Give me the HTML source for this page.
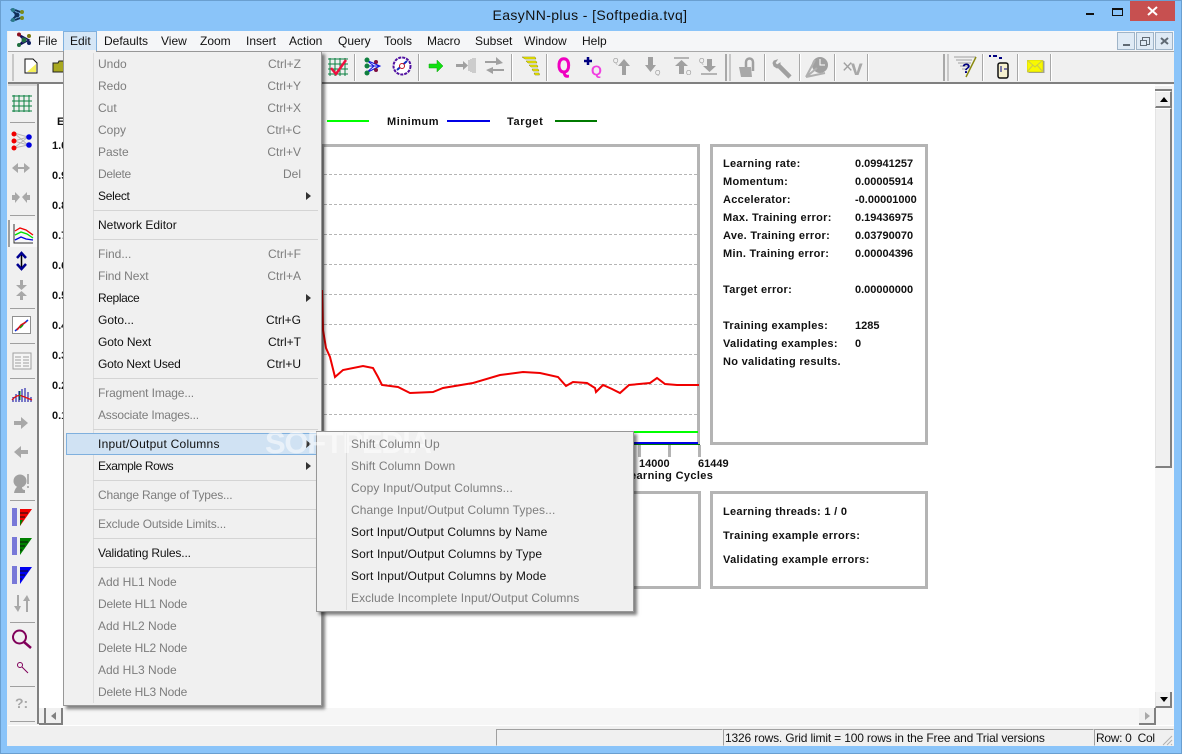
<!DOCTYPE html>
<html><head><meta charset="utf-8"><title>EasyNN-plus</title>
<style>
html,body{margin:0;padding:0;width:1182px;height:754px;overflow:hidden;background:#8ac4f9}
*{box-sizing:border-box}
body{font-family:"Liberation Sans",sans-serif;position:relative}
div,span,svg{position:absolute}
.t{white-space:nowrap;line-height:14px}
.mb{font-size:12px;top:34px;color:#111;white-space:nowrap;line-height:14px}
.b{font-weight:bold;font-size:11px;color:#111;white-space:nowrap;line-height:13px}
.l{letter-spacing:.3px}
.m{font-size:12px;color:#111;white-space:nowrap;line-height:14px;left:98px}
.g{color:#7d7d7d}
.s{font-size:12px;color:#7d7d7d;white-space:nowrap;line-height:14px;right:881px}
.n{left:351px;letter-spacing:.09px}
.sep{background:#d4d4d4;height:1px;left:93px;width:225px}
.ts{top:54px;width:2px;height:27px;background:#a8a8a8;border-right:1px solid #fff}
.ls{left:10px;width:25px;height:1px;background:#a0a0a0}
.dash{left:324px;width:373px;border-top:1px dashed #b5b5b5;height:1px}
</style></head><body>
<!-- frame -->
<div style="left:0;top:0;width:1182px;height:754px;background:#8ac4f9;border:1px solid #6a9fd0"></div>
<div class="t" style="left:0;width:1182px;top:7px;text-align:center;font-size:14px;color:#111;line-height:16px;letter-spacing:.39px;text-indent:-2px">EasyNN-plus - [Softpedia.tvq]</div>
<svg style="left:9px;top:7px" width="18" height="17" viewBox="0 0 18 17"><path d="M2 2L8 8L2 14M6 3L14 6M6 13L14 10" stroke="#10305a" stroke-width="2" fill="none"/><circle cx="4" cy="3" r="2" fill="#2a7a8a"/><circle cx="4" cy="13" r="2" fill="#2a7a8a"/><circle cx="8" cy="8" r="2.5" fill="#10305a"/><circle cx="13" cy="5" r="2" fill="#7a8a20"/><circle cx="13" cy="11" r="2" fill="#7a8a20"/></svg>
<div style="left:1086px;top:13px;width:8px;height:2px;background:#111"></div>
<div style="left:1112px;top:8px;width:11px;height:8px;border:1px solid #111;border-top-width:2px"></div>
<div style="left:1130px;top:1px;width:45px;height:20px;background:#c75050"></div>
<svg style="left:1147px;top:6px" width="11" height="10" viewBox="0 0 11 10"><path d="M1 1L10 9M10 1L1 9" stroke="#fff" stroke-width="2"/></svg>

<!-- client -->
<div style="left:7px;top:31px;width:1167px;height:715px;background:#f0f0f0"></div>
<div style="left:8px;top:31px;width:1166px;height:20px;background:#f5f6f8"></div>
<div style="left:8px;top:51px;width:1166px;height:1px;background:#a8a8a8"></div>
<svg style="left:15px;top:32px" width="18" height="16" viewBox="0 0 18 16"><path d="M3 2L9 8L3 14M3 2L14 8L3 14" stroke="#10105a" stroke-width="1.5" fill="none"/><circle cx="4" cy="2.5" r="2" fill="#8a1020"/><circle cx="4" cy="13" r="2" fill="#207040"/><circle cx="9" cy="8" r="2.5" fill="#207040"/><circle cx="14" cy="4" r="2" fill="#7a7a10"/><circle cx="14" cy="11" r="2" fill="#102060"/></svg>
<div class="mb" style="left:38px">File</div>
<div style="left:63px;top:31px;width:34px;height:20px;background:#d5e6f6;border:1px solid #7fb0de"></div>
<div class="mb" style="left:70px">Edit</div>
<div class="mb" style="left:104px">Defaults</div>
<div class="mb" style="left:161px">View</div>
<div class="mb" style="left:200px">Zoom</div>
<div class="mb" style="left:246px">Insert</div>
<div class="mb" style="left:289px">Action</div>
<div class="mb" style="left:338px">Query</div>
<div class="mb" style="left:384px">Tools</div>
<div class="mb" style="left:427px">Macro</div>
<div class="mb" style="left:475px">Subset</div>
<div class="mb" style="left:524px">Window</div>
<div class="mb" style="left:582px">Help</div>
<!-- MDI buttons -->
<div style="left:1117px;top:32px;width:18px;height:18px;background:#dfeaf5;border:1px solid #9fb4c8"></div>
<div style="left:1123px;top:44px;width:7px;height:2px;background:#606a74"></div>
<div style="left:1136px;top:32px;width:18px;height:18px;background:#dfeaf5;border:1px solid #9fb4c8"></div>
<div style="left:1142px;top:37px;width:8px;height:8px;border:1px solid #606a74"></div>
<div style="left:1140px;top:40px;width:7px;height:6px;border:1px solid #606a74;background:#dfeaf5"></div>
<div style="left:1155px;top:32px;width:18px;height:18px;background:#dfeaf5;border:1px solid #9fb4c8"></div>
<svg style="left:1160px;top:37px" width="9" height="8" viewBox="0 0 9 8"><path d="M1 1L8 7M8 1L1 7" stroke="#606a74" stroke-width="2"/></svg>

<!-- toolbar -->
<div style="left:12px;top:54px;width:2px;height:27px;background:#c8c8c8"></div>
<svg style="left:24px;top:58px" width="14" height="16" viewBox="0 0 14 16"><path d="M1 1H9L13 5V15H1Z" fill="#fff" stroke="#111"/><path d="M3 14L12 6V14Z" fill="#f5f05a"/></svg>
<svg style="left:52px;top:60px" width="14" height="13" viewBox="0 0 14 13"><path d="M1 3H6L7 1H13V12H1Z" fill="#a8a820" stroke="#222"/></svg>
<div class="ts" style="left:354px"></div>
<svg style="left:328px;top:57px" width="20" height="20" viewBox="0 0 20 20"><path d="M2 1V19M7 1V19M12 1V19M17 1V19M0 2H20M0 7H20M0 12H20M0 17H20" stroke="#0a8040" stroke-width="1"/><path d="M3 11L8 17L18 3" stroke="#f01040" stroke-width="2.5" fill="none"/></svg>
<svg style="left:362px;top:56px" width="22" height="21" viewBox="0 0 22 21"><path d="M4 4L18 10L4 17M4 4L12 10L4 17M4 10H18" stroke="#1010e0" fill="none"/><circle cx="5" cy="4" r="2.5" fill="#108040"/><circle cx="5" cy="10" r="2.5" fill="#108040"/><circle cx="5" cy="17" r="2.5" fill="#108040"/><circle cx="14" cy="6" r="2" fill="#801040"/><circle cx="14" cy="14" r="2" fill="#801040"/></svg>
<svg style="left:392px;top:56px" width="20" height="20" viewBox="0 0 20 20"><circle cx="10" cy="10" r="8.5" fill="#fff" stroke="#5010a0" stroke-width="2" stroke-dasharray="3 1"/><path d="M5 14L15 5" stroke="#1030c0" stroke-width="2"/><circle cx="10" cy="10" r="2.5" fill="#fff" stroke="#c01020"/></svg>
<div class="ts" style="left:418px"></div>
<svg style="left:428px;top:59px" width="16" height="14" viewBox="0 0 16 14"><path d="M1 5H9V1L15 7L9 13V9H1Z" fill="#10e010" stroke="#10a010" stroke-width=".5"/></svg>
<svg style="left:455px;top:57px" width="22" height="17" viewBox="0 0 22 17"><path d="M1 7H8V4L13 8.500L8 13V10H1Z" fill="#a0a0a0"/><path d="M14 3V14M16 2V15M18 1V16M20 1V16" stroke="#a8a8a8"/></svg>
<svg style="left:484px;top:56px" width="21" height="19" viewBox="0 0 21 19"><path d="M1 5H12V1L19 7L12 9V7H1ZM20 13H9V11L2 14L9 18V15H20Z" fill="#a0a0a0"/></svg>
<div class="ts" style="left:511px"></div>
<svg style="left:521px;top:56px" width="19" height="20" viewBox="0 0 19 20"><path d="M1 1H14L15 3H4ZM5 5H15L16 7H7ZM8 9H16L17 11H10ZM11 13H17L18 15H12ZM13 17H18L18.500 19H14Z" fill="#f5f000" stroke="#808000" stroke-width=".5"/></svg>
<div class="ts" style="left:546px"></div>
<div class="t" style="left:557px;top:55px;font:bold 22px/22px 'Liberation Sans',sans-serif;transform:scaleX(.8);transform-origin:0 0;color:#f000c0;-webkit-text-stroke:.5px #f000c0">Q</div>
<svg style="left:584px;top:57px" width="8" height="9" viewBox="0 0 8 9"><path d="M4 0V8M0 4H8" stroke="#000080" stroke-width="2.500"/></svg>
<div class="t" style="left:591px;top:63px;font:bold 14px/14px 'Liberation Sans',sans-serif;color:#f040e0">Q</div>
<svg style="left:613px;top:56px" width="18" height="20" viewBox="0 0 18 20"><path d="M9 19V10H5L11 3L17 10H13V19Z" fill="#a0a0a0"/><text x="0" y="7" font-size="7" fill="#a0a0a0" font-family="Liberation Sans">Q</text></svg>
<svg style="left:645px;top:56px" width="18" height="20" viewBox="0 0 18 20"><path d="M3 1V9H0L5.500 16L11 9H8V1Z" fill="#a0a0a0"/><text x="10" y="19" font-size="7" fill="#a0a0a0" font-family="Liberation Sans">Q</text></svg>
<svg style="left:673px;top:57px" width="20" height="18" viewBox="0 0 20 18"><path d="M1 1H16" stroke="#a0a0a0" stroke-width="1.500"/><path d="M6 17V9H2L8.500 3L15 9H11V17Z" fill="#a0a0a0"/><text x="13" y="18" font-size="7" fill="#a0a0a0" font-family="Liberation Sans">Q</text></svg>
<svg style="left:699px;top:56px" width="20" height="19" viewBox="0 0 20 19"><path d="M8 3V10H4L10.500 16L17 10H13V3Z" fill="#a0a0a0"/><path d="M2 18H18" stroke="#a0a0a0" stroke-width="1.500"/><text x="0" y="7" font-size="7" fill="#a0a0a0" font-family="Liberation Sans">Q</text></svg>
<div style="left:725px;top:54px;width:2px;height:27px;background:#a8a8a8"></div>
<div style="left:729px;top:54px;width:2px;height:27px;background:#c8c8c8"></div>
<svg style="left:738px;top:57px" width="18" height="21" viewBox="0 0 18 21"><path d="M1 10H13L14 20H3Z" fill="#a8a8a8"/><path d="M8 10V5A3.500 3.500 0 0 1 15 5V14" stroke="#a0a0a0" stroke-width="2.500" fill="none"/></svg>
<div class="ts" style="left:764px"></div>
<svg style="left:772px;top:59px" width="21" height="20" viewBox="0 0 21 20"><path d="M7 7L18 18" stroke="#a0a0a0" stroke-width="4.500"/><path d="M2 2L5 1L3 4L5 6L8 4L8 8L5 9L2 7L1 4Z" fill="#a0a0a0" stroke="#a0a0a0"/></svg>
<div class="ts" style="left:799px"></div>
<svg style="left:805px;top:56px" width="24" height="23" viewBox="0 0 24 23"><circle cx="15" cy="9" r="8" fill="#a0a0a0"/><path d="M1 21L10 4M1 21L12 12M1 21L20 17" stroke="#b0b0b0" stroke-width="2"/><path d="M15 3V9H20" stroke="#fff" fill="none"/></svg>
<div class="ts" style="left:834px"></div>
<div class="t" style="left:842px;top:58px;font-size:19px;line-height:20px;color:#a0a0a0">×</div>
<div class="t" style="left:851px;top:59px;font-size:21px;line-height:20px;color:#a8a8a8;font-weight:bold">v</div>
<div class="ts" style="left:867px"></div>
<div style="left:943px;top:54px;width:2px;height:27px;background:#a8a8a8"></div>
<div style="left:947px;top:54px;width:2px;height:27px;background:#c8c8c8"></div>
<svg style="left:953px;top:56px" width="24" height="22" viewBox="0 0 24 22"><path d="M1 1H23M3 4H19M5 7H18M7 10H16M9 13H14" stroke="#a0a0a0"/><path d="M23 1L13 21" stroke="#8a8a10" stroke-width="1.500"/><text x="9" y="17" font-size="14" font-weight="bold" fill="#000080" font-family="Liberation Sans">?</text></svg>
<div class="ts" style="left:982px"></div>
<svg style="left:988px;top:55px" width="22" height="24" viewBox="0 0 22 24"><rect x="10" y="8" width="10" height="15" rx="2" fill="#f5f0d0" stroke="#111" stroke-width="1.500"/><path d="M1 1H3M5 1H9M11 3H14" stroke="#000080" stroke-width="2"/><path d="M13 11V17M16 14H19" stroke="#000080"/></svg>
<div class="ts" style="left:1017px"></div>
<svg style="left:1027px;top:60px" width="18" height="14" viewBox="0 0 18 14"><rect x="1.500" y="1" width="16" height="12" fill="#a0a0a0"/><rect x="0" y="0" width="16" height="12" fill="#f8f800" stroke="#b0b020" stroke-width=".5"/><path d="M0 0L8 7L16 0M0 12L6 5M16 12L10 5" stroke="#c8c850" fill="none"/></svg>
<div class="ts" style="left:1050px"></div>
<div style="left:8px;top:82px;width:1166px;height:2px;background:#808080"></div>

<!-- left toolbar -->
<div style="left:37px;top:84px;width:2px;height:640px;background:#808080"></div>
<div style="left:8px;top:84px;width:29px;height:2px;background:#d8d8d8"></div>
<svg style="left:12px;top:94px" width="20" height="19" viewBox="0 0 20 19"><path d="M2 1V18M7 1V18M12 1V18M17 1V18M0 2H20M0 7H20M0 12H20M0 17H20" stroke="#0a8040"/></svg>
<div class="ls" style="top:122px"></div>
<svg style="left:11px;top:129px" width="22" height="22" viewBox="0 0 22 22"><path d="M3 4L17 8L3 12L17 16L3 19M3 4L17 16M3 19L17 8" stroke="#b8b8b8" fill="none"/><circle cx="3" cy="5" r="2.500" fill="#f00000"/><circle cx="3" cy="12" r="2.500" fill="#f00000"/><circle cx="3" cy="19" r="2.500" fill="#f00000"/><circle cx="18" cy="8" r="2.800" fill="#0000e0"/><circle cx="18" cy="16" r="2.800" fill="#0000e0"/></svg>
<svg style="left:11px;top:161px" width="20" height="14" viewBox="0 0 20 14"><path d="M1 7L7 2V12ZM19 7L13 2V12ZM7 6H13V8H7Z" fill="#a8a8a8"/></svg>
<svg style="left:11px;top:191px" width="20" height="13" viewBox="0 0 20 13"><path d="M9 6L4 1V4H1V9H4V12ZM11 6L16 1V4H19V9H16V12Z" fill="#a8a8a8"/></svg>
<div class="ls" style="top:215px"></div>
<div style="left:8px;top:220px;width:29px;height:27px;background:#f8f8f8;border-left:2px solid #a0a0a0"></div>
<svg style="left:12px;top:223px" width="22" height="21" viewBox="0 0 22 21"><path d="M2 1V20H21" stroke="#333" fill="none"/><path d="M3 8L8 5L14 7L21 12" stroke="#f00000" fill="none" stroke-width="1.300"/><path d="M3 12L9 9L15 11L21 15" stroke="#00e000" fill="none" stroke-width="1.300"/><path d="M3 17L9 14L14 16L21 17" stroke="#0000e0" fill="none" stroke-width="1.300"/></svg>
<svg style="left:14px;top:250px" width="15" height="22" viewBox="0 0 15 22"><path d="M7.500 3V19" stroke="#000" stroke-width="1.500"/><path d="M3 8L7.500 3L12 8M3 14L7.500 19L12 14" stroke="#000090" stroke-width="2.500" fill="none"/></svg>
<svg style="left:14px;top:280px" width="15" height="21" viewBox="0 0 15 21"><path d="M6 0H9V5H13L7.500 10L2 5H6ZM7.500 11L13 16H9V20H6V16H2Z" fill="#a8a8a8"/></svg>
<div class="ls" style="top:308px"></div>
<div style="left:12px;top:316px;width:19px;height:18px;border:1px solid #909090;background:#fff"></div>
<svg style="left:12px;top:316px" width="19" height="18" viewBox="0 0 19 18"><path d="M3 15L16 4" stroke="#1030d0" stroke-width="1.500"/><path d="M5 14L9 9L14 6" stroke="#e01010" stroke-width="1.500" fill="none"/><path d="M8 12L11 9" stroke="#10a010" stroke-width="1.500"/></svg>
<div class="ls" style="top:343px"></div>
<svg style="left:12px;top:351px" width="20" height="19" viewBox="0 0 20 19"><rect x="1" y="2" width="18" height="16" fill="#f5f5f5" stroke="#a0a0a0"/><path d="M3 6H9M11 6H17M3 9H9M11 9H17M3 12H9M11 12H17M3 15H9M11 15H17" stroke="#a0a0a0"/></svg>
<div class="ls" style="top:378px"></div>
<svg style="left:11px;top:386px" width="22" height="18" viewBox="0 0 22 18"><path d="M2 16V11M5 16V8M8 16V5M11 16V3M14 16V2M17 16V6M20 16V11" stroke="#0000a0"/><path d="M1 14Q6 8 11 10T21 14" stroke="#e01010" fill="none" stroke-width="1.300"/><path d="M9 5V14" stroke="#10a010"/></svg>
<svg style="left:13px;top:416px" width="16" height="14" viewBox="0 0 16 14"><path d="M1 5H8V1L15 7L8 13V9H1Z" fill="#a8a8a8"/></svg>
<svg style="left:13px;top:445px" width="16" height="14" viewBox="0 0 16 14"><path d="M15 5H8V1L1 7L8 13V9H15Z" fill="#a8a8a8"/></svg>
<svg style="left:12px;top:473px" width="18" height="21" viewBox="0 0 18 21"><circle cx="8" cy="8" r="6.500" fill="#a0a0a0"/><path d="M2 20C3 15 5 14 6 13H10C10 15 10 17 13 17V20Z" fill="#a0a0a0"/><path d="M16 1V11" stroke="#b0b0b0" stroke-width="2"/><path d="M16 13V15" stroke="#b0b0b0" stroke-width="2"/></svg>
<div class="ls" style="top:500px"></div>
<svg style="left:11px;top:507px" width="21" height="20" viewBox="0 0 21 20"><path d="M1 2H6M1 4H6M1 6H6M1 8H6M1 10H6M1 12H6M1 14H6M1 16H6M1 18H6" stroke="#0000c0"/><path d="M9 2H21L9 19Z" fill="#f00000"/><path d="M9 6H17M9 10H14" stroke="#111"/><path d="M9 13H12L9 19Z" fill="#008000"/></svg>
<svg style="left:11px;top:536px" width="21" height="20" viewBox="0 0 21 20"><path d="M1 2H6M1 4H6M1 6H6M1 8H6M1 10H6M1 12H6M1 14H6M1 16H6M1 18H6" stroke="#0000c0"/><path d="M9 2H21L9 19Z" fill="#008000"/><path d="M9 6H17M9 10H14M9 14H11" stroke="#111"/></svg>
<svg style="left:11px;top:565px" width="21" height="20" viewBox="0 0 21 20"><path d="M1 2H6M1 4H6M1 6H6M1 8H6M1 10H6M1 12H6M1 14H6M1 16H6M1 18H6" stroke="#0000c0"/><path d="M9 2H21L9 19Z" fill="#0000f0"/><path d="M9 6H17M9 10H14M9 14H11" stroke="#111"/></svg>
<svg style="left:13px;top:594px" width="18" height="19" viewBox="0 0 18 19"><path d="M4 1V12H1L5 18L8 12H6V1ZM13 18V7H10L14 1L17 7H15V18Z" fill="#a8a8a8"/></svg>
<div class="ls" style="top:622px"></div>
<svg style="left:11px;top:629px" width="22" height="20" viewBox="0 0 22 20"><circle cx="8.500" cy="8" r="6.500" fill="none" stroke="#80005a" stroke-width="2"/><path d="M13 13L20 19" stroke="#80005a" stroke-width="2.500"/></svg>
<svg style="left:16px;top:661px" width="13" height="13" viewBox="0 0 13 13"><circle cx="4" cy="4" r="2.500" fill="none" stroke="#80005a"/><path d="M6 6L12 12" stroke="#80005a"/></svg>
<div class="ls" style="top:686px"></div>
<div class="t" style="left:15px;top:695px;font-size:14px;font-weight:bold;color:#a8a8a8;line-height:16px">?:</div>
<div class="ls" style="top:721px"></div>

<!-- content -->
<div style="left:39px;top:84px;width:1116px;height:624px;background:#fff"></div>
<div class="b" style="left:57px;top:116px">Er</div>
<div class="b" style="left:52px;top:140px">1.0</div>
<div class="b" style="left:52px;top:170px">0.9</div>
<div class="b" style="left:52px;top:200px">0.8</div>
<div class="b" style="left:52px;top:230px">0.7</div>
<div class="b" style="left:52px;top:260px">0.6</div>
<div class="b" style="left:52px;top:290px">0.5</div>
<div class="b" style="left:52px;top:320px">0.4</div>
<div class="b" style="left:52px;top:350px">0.3</div>
<div class="b" style="left:52px;top:380px">0.2</div>
<div class="b" style="left:52px;top:410px">0.1</div>
<div style="left:327px;top:120px;width:42px;height:2px;background:#00ff00"></div>
<div class="b" style="left:387px;top:116px;letter-spacing:.55px">Minimum</div>
<div style="left:447px;top:120px;width:43px;height:2px;background:#0000e6"></div>
<div class="b" style="left:507px;top:116px;letter-spacing:.6px">Target</div>
<div style="left:555px;top:120px;width:42px;height:2px;background:#007a00"></div>

<!-- chart -->
<div style="left:63px;top:144px;width:637px;height:3px;background:#b4b4b4"></div>
<div style="left:697px;top:144px;width:3px;height:300px;background:#b4b4b4"></div>
<div style="left:321px;top:144px;width:3px;height:300px;background:#b4b4b4"></div>
<div class="dash" style="top:174px"></div>
<div class="dash" style="top:204px"></div>
<div class="dash" style="top:234px"></div>
<div class="dash" style="top:264px"></div>
<div class="dash" style="top:294px"></div>
<div class="dash" style="top:324px"></div>
<div class="dash" style="top:354px"></div>
<div class="dash" style="top:384px"></div>
<div class="dash" style="top:414px"></div>
<svg style="left:0;top:0" width="1182" height="754" viewBox="0 0 1182 754"><polyline fill="none" stroke="#f00000" stroke-width="2" points="322,290 323,330 326,348 330,357 335,377 343,370 363,366 373,368 378,377 382,385 398,387 410,393 433,392 443,388 473,383 500,375 523,372 540,373 558,377 566,386 573,382 587,383 595,388 596,392 603,385 612,389 620,393 629,385 650,383 657,378 665,384 677,385 699,385"/></svg>
<div style="left:630px;top:431px;width:68px;height:2px;background:#00ff00"></div>
<div style="left:630px;top:442px;width:68px;height:2px;background:#0000e6"></div>
<div style="left:630px;top:444px;width:70px;height:1px;background:#007a00"></div>
<div style="left:638px;top:445px;width:3px;height:12px;background:#b4b4b4"></div>
<div style="left:668px;top:445px;width:3px;height:12px;background:#b4b4b4"></div>
<div style="left:698px;top:445px;width:3px;height:12px;background:#b4b4b4"></div>
<div class="b" style="left:639px;top:458px">14000</div>
<div class="b" style="left:698px;top:458px">61449</div>
<div class="b" style="left:630px;top:470px;letter-spacing:.35px">earning Cycles</div>

<!-- right panel -->
<div style="left:710px;top:144px;width:218px;height:301px;border:3px solid #b4b4b4"></div>
<div class="b l" style="left:723px;top:158px">Learning rate:</div><div class="b" style="left:855px;top:158px">0.09941257</div>
<div class="b l" style="left:723px;top:176px">Momentum:</div><div class="b" style="left:855px;top:176px">0.00005914</div>
<div class="b l" style="left:723px;top:194px">Accelerator:</div><div class="b" style="left:855px;top:194px">-0.00001000</div>
<div class="b l" style="left:723px;top:212px">Max. Training error:</div><div class="b" style="left:855px;top:212px">0.19436975</div>
<div class="b l" style="left:723px;top:230px">Ave. Training error:</div><div class="b" style="left:855px;top:230px">0.03790070</div>
<div class="b l" style="left:723px;top:248px">Min. Training error:</div><div class="b" style="left:855px;top:248px">0.00004396</div>
<div class="b l" style="left:723px;top:284px">Target error:</div><div class="b" style="left:855px;top:284px">0.00000000</div>
<div class="b l" style="left:723px;top:320px">Training examples:</div><div class="b" style="left:855px;top:320px">1285</div>
<div class="b l" style="left:723px;top:338px">Validating examples:</div><div class="b" style="left:855px;top:338px">0</div>
<div class="b l" style="left:723px;top:356px">No validating results.</div>
<div style="left:600px;top:491px;width:101px;height:98px;border:3px solid #b4b4b4;border-left:0"></div>
<div style="left:710px;top:491px;width:218px;height:98px;border:3px solid #b4b4b4"></div>
<div class="b l" style="left:723px;top:506px">Learning threads: 1 / 0</div>
<div class="b" style="left:723px;top:530px;letter-spacing:.37px">Training example errors:</div>
<div class="b" style="left:723px;top:554px;letter-spacing:.35px">Validating example errors:</div>

<!-- scrollbars -->
<div style="left:1155px;top:84px;width:19px;height:624px;background:#f6f6f6"></div>
<div style="left:1155px;top:85px;width:17px;height:6px;background:#f0f0f0;border-top:1px solid #fff;border-bottom:2px solid #808080"></div>
<div style="left:1155px;top:91px;width:17px;height:17px;background:#f0f0f0;border-top:1px solid #fff;border-right:2px solid #808080;border-bottom:2px solid #808080;border-left:1px solid #e0e0e0"></div>
<svg style="left:1160px;top:97px" width="8" height="5" viewBox="0 0 8 5"><path d="M4 0L8 5H0Z" fill="#000"/></svg>
<div style="left:1155px;top:108px;width:17px;height:360px;background:#f0f0f0;border-left:1px solid #e4e4e4;border-top:1px solid #fff;border-right:2px solid #808080;border-bottom:2px solid #808080"></div>
<div style="left:1155px;top:692px;width:17px;height:16px;background:#f0f0f0;border-right:2px solid #808080;border-bottom:2px solid #808080;border-left:1px solid #e4e4e4"></div>
<svg style="left:1160px;top:697px" width="8" height="5" viewBox="0 0 8 5"><path d="M4 5L8 0H0Z" fill="#000"/></svg>
<div style="left:39px;top:708px;width:1135px;height:17px;background:#f6f6f6"></div>
<div style="left:39px;top:708px;width:7px;height:17px;background:#f0f0f0;border-right:2px solid #808080;border-bottom:2px solid #808080"></div>
<div style="left:46px;top:708px;width:17px;height:17px;background:#f0f0f0;border-right:2px solid #808080;border-bottom:2px solid #808080"></div>
<svg style="left:51px;top:712px" width="5" height="8" viewBox="0 0 5 8"><path d="M0 4L5 0V8Z" fill="#808080"/></svg>
<div style="left:1139px;top:708px;width:17px;height:17px;background:#f0f0f0;border-right:2px solid #808080;border-bottom:2px solid #808080"></div>
<svg style="left:1145px;top:712px" width="5" height="8" viewBox="0 0 5 8"><path d="M5 4L0 0V8Z" fill="#a8a8a8"/></svg>
<div style="left:8px;top:725px;width:1166px;height:1px;background:#fff"></div>

<!-- status -->
<div style="left:496px;top:729px;width:227px;height:17px;border:1px solid #a0a0a0;border-bottom-color:#f0f0f0;border-right-color:#f0f0f0"></div>
<div style="left:723px;top:729px;width:371px;height:17px;border:1px solid #a0a0a0;border-bottom-color:#f0f0f0;border-right-color:#f0f0f0"></div>
<div style="left:1094px;top:729px;width:80px;height:17px;border:1px solid #a0a0a0;border-bottom-color:#f0f0f0;border-right-color:#f0f0f0"></div>
<div class="t" style="left:725px;top:731px;font-size:12px;color:#111;letter-spacing:-.16px">1326 rows. Grid limit = 100 rows in the Free and Trial versions</div>
<div class="t" style="left:1096px;top:731px;font-size:12px;color:#111;letter-spacing:-.3px">Row: 0&nbsp; Col</div>
<svg style="left:1161px;top:734px" width="12" height="12" viewBox="0 0 12 12"><path d="M11 2L2 11M11 6L6 11M11 10L10 11" stroke="#b0b0b0" stroke-width="1"/></svg>

<!-- main menu -->
<div style="left:63px;top:51px;width:259px;height:655px;background:#f0f0f0;border:1px solid #979797;box-shadow:3px 3px 3px rgba(0,0,0,.5)"></div>
<div style="left:64px;top:50px;width:32px;height:2px;background:#f0f0f0"></div>
<div style="left:93px;top:53px;width:1px;height:650px;background:#dcdcdc"></div>
<div class="m g" style="top:57px">Undo</div><div class="s" style="top:57px">Ctrl+Z</div>
<div class="m g" style="top:79px">Redo</div><div class="s" style="top:79px">Ctrl+Y</div>
<div class="m g" style="top:101px">Cut</div><div class="s" style="top:101px">Ctrl+X</div>
<div class="m g" style="top:123px">Copy</div><div class="s" style="top:123px">Ctrl+C</div>
<div class="m g" style="top:145px">Paste</div><div class="s" style="top:145px">Ctrl+V</div>
<div class="m g" style="top:167px;letter-spacing:-.3px">Delete</div><div class="s" style="top:167px">Del</div>
<div class="m" style="top:189px;letter-spacing:-.3px">Select</div>
<svg style="left:306px;top:192px" width="5" height="8" viewBox="0 0 5 8"><path d="M0 0L5 4L0 8Z" fill="#333"/></svg>
<div class="sep" style="top:210px"></div>
<div class="m" style="top:218px">Network Editor</div>
<div class="sep" style="top:239px"></div>
<div class="m g" style="top:247px">Find...</div><div class="s" style="top:247px">Ctrl+F</div>
<div class="m g" style="top:269px;letter-spacing:-.1px">Find Next</div><div class="s" style="top:269px">Ctrl+A</div>
<div class="m" style="top:291px;letter-spacing:-.4px">Replace</div>
<svg style="left:306px;top:294px" width="5" height="8" viewBox="0 0 5 8"><path d="M0 0L5 4L0 8Z" fill="#333"/></svg>
<div class="m" style="top:313px">Goto...</div><div class="s" style="top:313px;color:#111">Ctrl+G</div>
<div class="m" style="top:335px;letter-spacing:-.1px">Goto Next</div><div class="s" style="top:335px;color:#111">Ctrl+T</div>
<div class="m" style="top:357px;letter-spacing:-.2px">Goto Next Used</div><div class="s" style="top:357px;color:#111">Ctrl+U</div>
<div class="sep" style="top:378px"></div>
<div class="m g" style="top:386px;letter-spacing:-.12px">Fragment Image...</div>
<div class="m g" style="top:408px;letter-spacing:-.2px">Associate Images...</div>
<div class="sep" style="top:429px"></div>
<div style="left:66px;top:433px;width:252px;height:22px;background:#d0e2f3;border:1px solid #7fb0de"></div>
<div class="m" style="top:437px;letter-spacing:.25px">Input/Output Columns</div>
<svg style="left:306px;top:440px" width="5" height="8" viewBox="0 0 5 8"><path d="M0 0L5 4L0 8Z" fill="#333"/></svg>
<div class="m" style="top:459px;letter-spacing:-.4px">Example Rows</div>
<svg style="left:306px;top:462px" width="5" height="8" viewBox="0 0 5 8"><path d="M0 0L5 4L0 8Z" fill="#333"/></svg>
<div class="sep" style="top:480px"></div>
<div class="m g" style="top:488px;letter-spacing:-.2px">Change Range of Types...</div>
<div class="sep" style="top:509px"></div>
<div class="m g" style="top:517px;letter-spacing:-.16px">Exclude Outside Limits...</div>
<div class="sep" style="top:538px"></div>
<div class="m" style="top:546px;letter-spacing:-.16px">Validating Rules...</div>
<div class="sep" style="top:567px"></div>
<div class="m g" style="top:575px">Add HL1 Node</div>
<div class="m g" style="top:597px;letter-spacing:-.2px">Delete HL1 Node</div>
<div class="m g" style="top:619px">Add HL2 Node</div>
<div class="m g" style="top:641px;letter-spacing:-.2px">Delete HL2 Node</div>
<div class="m g" style="top:663px">Add HL3 Node</div>
<div class="m g" style="top:685px;letter-spacing:-.2px">Delete HL3 Node</div>

<!-- submenu -->
<div style="left:316px;top:431px;width:318px;height:181px;background:#f0f0f0;border:1px solid #979797;box-shadow:3px 3px 3px rgba(0,0,0,.5)"></div>
<div style="left:346px;top:433px;width:1px;height:177px;background:#dcdcdc"></div>
<!-- watermark -->
<div class="t" style="left:265px;top:428px;font-size:31px;line-height:30px;font-weight:bold;letter-spacing:-1.3px;color:#fff;opacity:.55">SOFTPEDIA</div>
<div class="m g n" style="top:437px">Shift Column Up</div>
<div class="m g n" style="top:459px">Shift Column Down</div>
<div class="m g n" style="top:481px;letter-spacing:.14px">Copy Input/Output Columns...</div>
<div class="m g n" style="top:503px">Change Input/Output Column Types...</div>
<div class="m n" style="top:525px">Sort Input/Output Columns by Name</div>
<div class="m n" style="top:547px;letter-spacing:.12px">Sort Input/Output Columns by Type</div>
<div class="m n" style="top:569px;letter-spacing:.12px">Sort Input/Output Columns by Mode</div>
<div class="m g n" style="top:591px">Exclude Incomplete Input/Output Columns</div>
</body></html>
